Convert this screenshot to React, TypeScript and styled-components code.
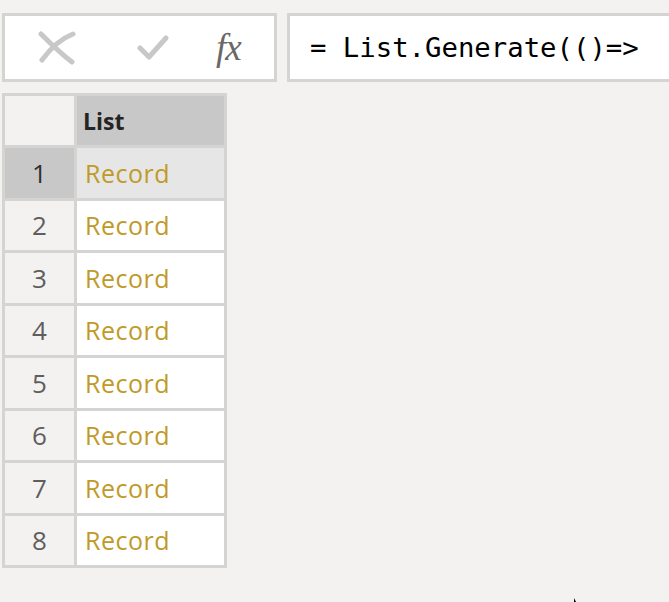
import React from 'react';
import styled, { createGlobalStyle } from 'styled-components';

const GlobalStyle = createGlobalStyle`
  html, body {
    margin: 0;
    padding: 0;
    background: #f3f2f1;
    overflow: hidden;
  }
  body {
    font-family: 'Open Sans', 'Noto Sans', sans-serif;
  }
`;

const Page = styled.div`
  position: relative;
  width: 669px;
  height: 602px;
  padding: 13px 0 0 2px;
  box-sizing: border-box;
  overflow: hidden;
`;

const FormulaRow = styled.div`
  display: flex;
  gap: 10px;
  height: 69px;
  margin-right: -20px;
`;

const ActionBox = styled.div`
  width: 275px;
  box-sizing: border-box;
  border: 3px solid #d5d4d3;
  background: #ffffff;
  display: flex;
  align-items: center;
  padding-left: 33px;
`;

const IconSlot = styled.div<{ $w: number }>`
  width: ${(p) => p.$w}px;
  display: flex;
  align-items: center;
`;

const Fx = styled.span`
  font-family: 'Liberation Serif', 'DejaVu Serif', serif;
  font-style: italic;
  font-size: 37px;
  color: #6a6867;
  letter-spacing: -1px;
  line-height: 1;
  margin-top: 0;
`;

const FormulaBox = styled.div`
  flex: 1;
  box-sizing: border-box;
  border: 3px solid #d5d4d3;
  background: #ffffff;
  display: flex;
  align-items: center;
  padding-left: 20px;
`;

const FormulaText = styled.span`
  font-family: 'DejaVu Sans Mono', 'Liberation Mono', monospace;
  font-size: 27.3px;
  color: #000000;
  white-space: pre;
`;

const Table = styled.div`
  margin-top: 11px;
  width: 225px;
  box-sizing: border-box;
  display: grid;
  grid-template-columns: 69px 147px;
  grid-template-rows: 49px repeat(8, 49.5px);
  gap: 3px;
  padding: 3px;
  background: #d5d4d3;
`;

const IndexCell = styled.div<{ $active?: boolean }>`
  background: ${(p) => (p.$active ? '#c8c8c8' : '#f3f2f1')};
  color: ${(p) => (p.$active ? '#323130' : '#605e5c')};
  font-size: 26px;
  display: flex;
  align-items: center;
  justify-content: center;
`;

const HeaderCell = styled.div`
  background: #c8c8c8;
  color: #252423;
  font-weight: 700;
  font-size: 23px;
  display: flex;
  align-items: center;
  padding-left: 6px;
`;

const ValueCell = styled.div<{ $active?: boolean }>`
  background: ${(p) => (p.$active ? '#e6e6e6' : '#ffffff')};
  color: #c09a28;
  font-size: 25px;
  letter-spacing: 0.5px;
  display: flex;
  align-items: center;
  padding-left: 8px;
`;

const Cursor = styled.svg`
  position: absolute;
  left: 573px;
  top: 598px;
`;

const rows = [1, 2, 3, 4, 5, 6, 7, 8];

export default function App() {
  return (
    <>
      <GlobalStyle />
      <Page>
        <FormulaRow>
          <ActionBox>
            <IconSlot $w={99}>
              <svg width="38" height="34" viewBox="0 0 38 34">
                <path
                  d="M3 3 C 12 12, 22 22, 34 31"
                  stroke="#c8c8c8"
                  strokeWidth="5"
                  strokeLinecap="round"
                  fill="none"
                />
                <path
                  d="M35 3 C 22 8, 12 18, 4 29"
                  stroke="#c8c8c8"
                  strokeWidth="5"
                  strokeLinecap="round"
                  fill="none"
                />
              </svg>
            </IconSlot>
            <IconSlot $w={79}>
              <svg width="32" height="26" viewBox="0 0 32 26">
                <path
                  d="M3 13 L12 22 L29 3"
                  stroke="#c8c8c8"
                  strokeWidth="5"
                  strokeLinecap="round"
                  strokeLinejoin="round"
                  fill="none"
                />
              </svg>
            </IconSlot>
            <IconSlot $w={40}>
              <Fx>fx</Fx>
            </IconSlot>
          </ActionBox>
          <FormulaBox>
            <FormulaText>= List.Generate(()=&gt;</FormulaText>
          </FormulaBox>
        </FormulaRow>
        <Table>
          <IndexCell />
          <HeaderCell>List</HeaderCell>
          {rows.map((n) => (
            <React.Fragment key={n}>
              <IndexCell $active={n === 1}>{n}</IndexCell>
              <ValueCell $active={n === 1}>Record</ValueCell>
            </React.Fragment>
          ))}
        </Table>
        <Cursor width="8" height="6" viewBox="0 0 8 6">
          <path d="M1 0 L1 6 L4 6 Z" fill="#000" />
        </Cursor>
      </Page>
    </>
  );
}
